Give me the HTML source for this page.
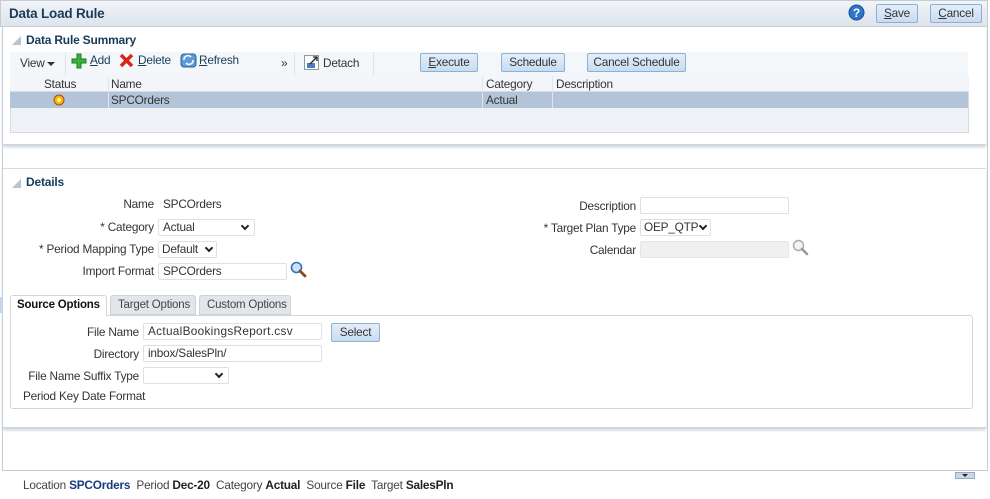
<!DOCTYPE html>
<html><head><meta charset="utf-8"><style>
*{box-sizing:border-box;margin:0;padding:0}
body{width:990px;height:499px;background:#fff;font-family:"Liberation Sans",sans-serif;font-size:11.8px;letter-spacing:-0.2px;color:#333;position:relative;overflow:hidden}
.a{position:absolute;white-space:nowrap}
.btn{position:absolute;border:1px solid #8fb0d0;border-radius:2px;background:linear-gradient(#e4eefa,#c8dcf2);color:#333;text-align:center}
.inp{position:absolute;border:1px solid #dbe1e6;border-radius:2px;background:#fff;padding-left:4px;line-height:15px}
.lbl{position:absolute;text-align:right;white-space:nowrap}
.chev{position:absolute;right:6px;top:3px;width:6px;height:6px;border-right:2px solid #222;border-bottom:2px solid #222;transform:rotate(45deg)}
.tri{position:absolute;width:0;height:0;border-left:9px solid transparent;border-bottom:9px solid #b9c4ce}
h3{position:absolute;font-size:12px;color:#183b59;font-weight:bold}
u{text-decoration:underline}
</style></head><body>
<div class="a" style="left:0;top:0;width:988px;height:27px;background:linear-gradient(#f1f4f8,#dde4ec);border:1px solid #c4ccd4;"></div>
<div class="a" style="left:9px;top:6px;font-size:13.5px;font-weight:bold;color:#183b59">Data Load Rule</div>
<svg class="a" style="left:848px;top:4px" width="17" height="17"><circle cx="8.5" cy="8.5" r="7.5" fill="#2e74c9" stroke="#1b4f94"/><text x="8.5" y="13" font-size="12" font-weight="bold" fill="#fff" text-anchor="middle" font-family="Liberation Sans">?</text></svg>
<div class="btn" style="left:876px;top:4px;width:42px;height:19px;line-height:17px"><u>S</u>ave</div>
<div class="btn" style="left:930px;top:4px;width:52px;height:19px;line-height:17px"><u>C</u>ancel</div>
<div class="a" style="left:2px;top:27px;width:986px;height:444px;border:1px solid #c4ccd4;border-top:none"></div>
<div class="a" style="left:0;top:297px;width:3px;height:16px;background:#c6d8ee"></div>
<div class="a" style="left:3px;top:27px;width:983px;height:118px;background:#fff;box-shadow:0 2px 3px #c8d0d8;border-bottom:1px solid #d0d6dc"></div>
<div class="tri" style="left:12px;top:36px"></div>
<h3 style="left:26px;top:33px">Data Rule Summary</h3>
<div class="a" style="left:10px;top:52px;width:958px;height:23px;background:#f4f7fa"></div>
<div class="a" style="left:65px;top:52px;width:1px;height:23px;background:#dde3e8"></div>
<div class="a" style="left:294px;top:52px;width:1px;height:23px;background:#dde3e8"></div>
<div class="a" style="left:373px;top:52px;width:1px;height:23px;background:#dde3e8"></div>
<div class="a" style="left:20px;top:56px">View</div>
<div class="a" style="left:47px;top:62px;border-left:4px solid transparent;border-right:4px solid transparent;border-top:4px solid #333"></div>
<svg class="a" style="left:71px;top:53px" width="16" height="16"><path d="M6 1h4v5h5v4h-5v5h-4v-5h-5v-4h5z" fill="#3ab53a" stroke="#1c7a1c"/></svg>
<div class="a" style="left:90px;top:53px;color:#183b59"><u>A</u>dd</div>
<svg class="a" style="left:119px;top:53px" width="15" height="15"><path d="M2 2L13 13M13 2L2 13" stroke="#d9261c" stroke-width="3.5"/></svg>
<div class="a" style="left:138px;top:53px;color:#183b59"><u>D</u>elete</div>
<svg class="a" style="left:180px;top:52px" width="17" height="16"><rect x="1" y="2" width="15" height="13" rx="3" fill="#5d9ad8" stroke="#2a5f9e"/><path d="M4 8a4 4 0 0 1 7-3M13 8a4 4 0 0 1-7 3" stroke="#fff" stroke-width="1.6" fill="none"/></svg>
<div class="a" style="left:199px;top:53px;color:#183b59"><u>R</u>efresh</div>
<div class="a" style="left:281px;top:56px;font-size:12px">»</div>
<svg class="a" style="left:304px;top:55px" width="15" height="15"><rect x="0.5" y="0.5" width="14" height="14" fill="#fff" stroke="#333" stroke-dasharray="1,1"/><rect x="3" y="8" width="8" height="5" fill="#4a7fc0"/><path d="M6 9L13 2M9 2h4v4" stroke="#222" stroke-width="1.3" fill="none"/></svg>
<div class="a" style="left:323px;top:56px">Detach</div>
<div class="btn" style="left:420px;top:53px;width:58px;height:19px;line-height:17px"><u>E</u>xecute</div>
<div class="btn" style="left:501px;top:53px;width:64px;height:19px;line-height:17px">Schedule</div>
<div class="btn" style="left:587px;top:53px;width:99px;height:19px;line-height:17px">Cancel Schedule</div>
<div class="a" style="left:10px;top:75px;width:959px;height:58px;background:#eef2f7;border:1px solid #d4dbe2"></div>
<div class="a" style="left:10px;top:75px;width:959px;height:17px;background:#f2f5f9;border-bottom:1px solid #d4dbe2"></div>
<div class="a" style="left:10px;top:92px;width:958px;height:16px;background:#b4c4d8"></div>
<div class="a" style="left:108px;top:76px;width:1px;height:32px;background:#dfe5eb"></div>
<div class="a" style="left:482px;top:76px;width:1px;height:32px;background:#dfe5eb"></div>
<div class="a" style="left:552px;top:76px;width:1px;height:32px;background:#dfe5eb"></div>
<div class="a" style="left:44px;top:77px">Status</div>
<div class="a" style="left:111px;top:77px">Name</div>
<div class="a" style="left:486px;top:77px">Category</div>
<div class="a" style="left:556px;top:77px">Description</div>
<svg class="a" style="left:53px;top:94px" width="12" height="12"><circle cx="6" cy="6" r="5" fill="#f4b400" stroke="#b8461a"/><circle cx="6" cy="6" r="2.2" fill="#fff8a0"/></svg>
<div class="a" style="left:111px;top:93px">SPCOrders</div>
<div class="a" style="left:486px;top:93px">Actual</div>
<div class="a" style="left:3px;top:168px;width:983px;height:260px;border-top:1px solid #d4dbe2;box-shadow:0 2px 3px #c8d0d8;border-bottom:1px solid #d0d6dc"></div>
<div class="tri" style="left:12px;top:179px"></div>
<h3 style="left:26px;top:175px">Details</h3>
<div class="lbl" style="right:836px;top:197px">Name</div>
<div class="a" style="left:163px;top:197px">SPCOrders</div>
<div class="lbl" style="right:836px;top:220px">* Category</div>
<div class="inp" style="left:158px;top:219px;width:97px;height:17px">Actual<span class="chev"></span></div>
<div class="lbl" style="right:836px;top:242px">* Period Mapping Type</div>
<div class="inp" style="left:158px;top:241px;width:59px;height:17px;padding-left:3px">Default<span class="chev" style="right:4px"></span></div>
<div class="lbl" style="right:836px;top:264px">Import Format</div>
<div class="inp" style="left:158px;top:263px;width:129px;height:17px">SPCOrders</div>
<svg class="a" style="left:290px;top:261px" width="17" height="17"><circle cx="6.5" cy="6.5" r="5" fill="#cfe3fa" stroke="#2f6fbf" stroke-width="1.6"/><path d="M10 10l5 5" stroke="#8a4a20" stroke-width="2.8" stroke-linecap="round"/></svg>
<div class="lbl" style="right:354px;top:199px">Description</div>
<div class="inp" style="left:640px;top:197px;width:149px;height:17px"></div>
<div class="lbl" style="right:354px;top:221px">* Target Plan Type</div>
<div class="inp" style="left:640px;top:219px;width:71px;height:17px;padding-left:3px">OEP_QTP<span class="chev" style="right:4px"></span></div>
<div class="lbl" style="right:354px;top:243px">Calendar</div>
<div class="inp" style="left:640px;top:241px;width:149px;height:17px;background:#f0f0f0;border-color:#e6e6e6"></div>
<svg class="a" style="left:792px;top:239px" width="17" height="17"><circle cx="6.5" cy="6.5" r="5" fill="#f4f4f4" stroke="#aaa" stroke-width="1.4"/><path d="M10 10l5 5" stroke="#999" stroke-width="2.6" stroke-linecap="round"/></svg>
<div class="a" style="left:10px;top:315px;width:963px;height:94px;border:1px solid #d0d6dc;border-radius:3px"></div>
<div class="a" style="left:10px;top:295px;width:97px;height:21px;background:#fff;border:1px solid #d0d6dc;border-bottom:1px solid #fff;border-radius:3px 3px 0 0;font-weight:bold;color:#111;padding:3px 0 0 6px;font-size:11.5px">Source Options</div>
<div class="a" style="left:110px;top:295px;width:86px;height:20px;background:#e2e6ea;border:1px solid #ccd2d8;border-radius:3px 3px 0 0;color:#444;padding:3px 0 0 7px;font-size:11.5px;overflow:hidden">Target Options</div>
<div class="a" style="left:199px;top:295px;width:92px;height:20px;background:#e2e6ea;border:1px solid #ccd2d8;border-radius:3px 3px 0 0;color:#444;padding:3px 0 0 7px;font-size:11.5px;overflow:hidden">Custom Options</div>
<div class="lbl" style="right:851px;top:325px">File Name</div>
<div class="inp" style="left:143px;top:323px;width:179px;height:17px;letter-spacing:0.3px">ActualBookingsReport.csv</div>
<div class="btn" style="left:331px;top:323px;width:49px;height:19px;line-height:17px">Select</div>
<div class="lbl" style="right:851px;top:347px">Directory</div>
<div class="inp" style="left:143px;top:345px;width:179px;height:17px">inbox/SalesPln/</div>
<div class="lbl" style="right:851px;top:369px">File Name Suffix Type</div>
<div class="inp" style="left:143px;top:367px;width:86px;height:17px"><span class="chev"></span></div>
<div class="a" style="left:23px;top:389px">Period Key Date Format</div>
<div class="a" style="left:955px;top:472px;width:20px;height:7px;background:#c6d8ee;border:1px solid #9ab"></div>
<div class="a" style="left:962px;top:474px;border-left:3px solid transparent;border-right:3px solid transparent;border-top:3px solid #222"></div>
<div class="a" style="left:23px;top:478px;color:#444">Location <b style="color:#183b80">SPCOrders</b>&nbsp; Period <b style="color:#222">Dec-20</b>&nbsp; Category <b style="color:#222">Actual</b>&nbsp; Source <b style="color:#222">File</b>&nbsp; Target <b style="color:#222">SalesPln</b></div>
</body></html>
